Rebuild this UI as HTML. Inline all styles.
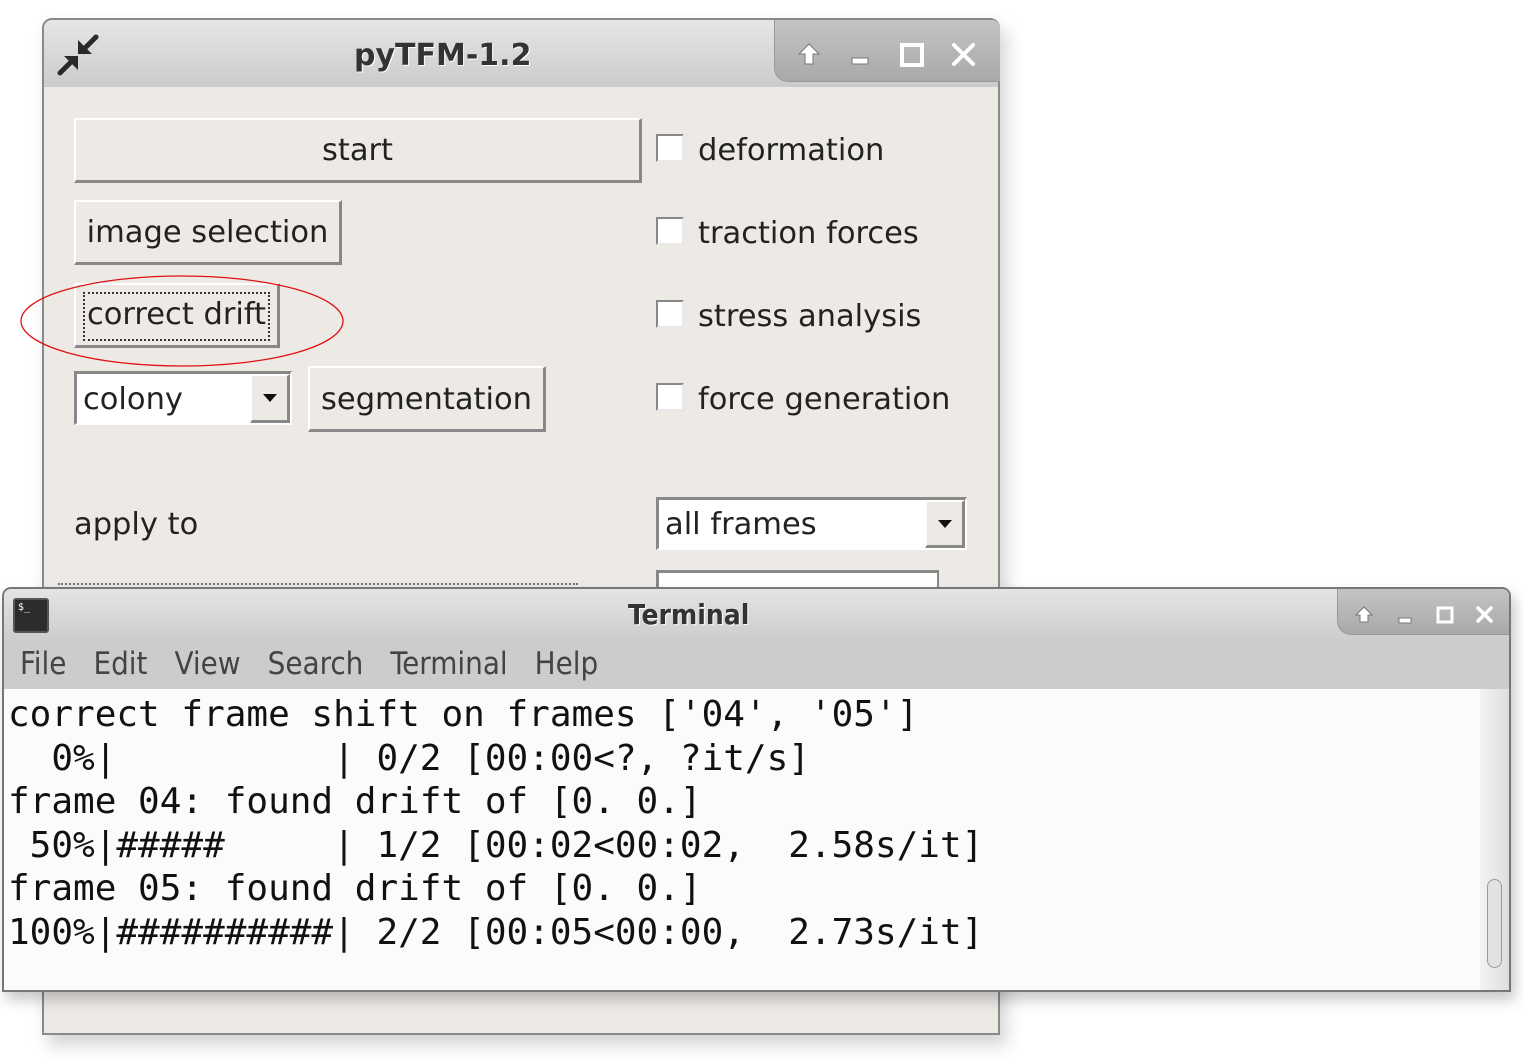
<!DOCTYPE html>
<html><head><meta charset="utf-8">
<style>
*{box-sizing:border-box;margin:0;padding:0}
body{width:1524px;height:1061px;background:#fff;position:relative;overflow:hidden;font-family:"DejaVu Sans","Liberation Sans",sans-serif;color:#222}
.abs{position:absolute}
.win{position:absolute;left:42px;top:18px;width:958px;height:1017px;background:#edeae6;border:2px solid #8a8a8a;border-radius:10px 10px 0 0;box-shadow:6px 10px 18px rgba(0,0,0,.18)}
.tb{position:absolute;left:0;top:0;right:0;height:67px;background:linear-gradient(#e6e6e6,#cbcbcb);border-radius:8px 8px 0 0}
.tab{position:absolute;background:linear-gradient(#c4c4c4,#a9a9a9);border-bottom-left-radius:14px;border-left:1px solid #999;border-bottom:1px solid #999}
.btn{position:absolute;background:#edeae6;border-top:2px solid #fff;border-left:2px solid #fff;border-right:3px solid #888;border-bottom:3px solid #888;font-size:30.5px;line-height:1;display:flex;align-items:center;justify-content:center;padding-top:3px}
.chk{position:absolute;width:28px;height:28px;background:#fff;border-top:2px solid #888;border-left:2px solid #888;border-right:2px solid #e8e8e8;border-bottom:2px solid #e8e8e8}
.lbl{position:absolute;font-size:30.5px;line-height:1}
.combo{position:absolute;background:#fff;border-top:3px solid #888;border-left:3px solid #888;border-right:2px solid #fff;border-bottom:2px solid #fff;font-size:30.5px;line-height:1}
.arr{position:absolute;top:0;bottom:0;right:0;background:#edeae6;border-top:2px solid #fff;border-left:2px solid #fff;border-right:3px solid #888;border-bottom:3px solid #888}
.arr:after{content:"";position:absolute;left:50%;top:50%;margin-left:-7px;margin-top:-4px;border-left:7px solid transparent;border-right:7px solid transparent;border-top:8px solid #111}
.term{position:absolute;left:2px;top:587px;width:1509px;height:405px;background:#ccc;border:2px solid #777;border-radius:9px 9px 0 0;box-shadow:4px 8px 14px rgba(0,0,0,.22);overflow:hidden}
.mono{font-family:"DejaVu Sans Mono","Liberation Mono",monospace;font-size:36px;line-height:43.6px;white-space:pre;color:#111}
</style></head><body>

<div class="win">
  <div class="tb">
    <svg class="abs" style="left:6px;top:8px" width="60" height="55" viewBox="0 0 60 55">
      <g stroke="#2a2a2a" stroke-width="5" stroke-linecap="round">
        <line x1="46" y1="9" x2="34" y2="21"/><line x1="10" y1="45" x2="22" y2="33"/>
      </g>
      <polygon points="28,12 28,26 42,26" fill="#2a2a2a"/>
      <polygon points="14,28 28,28 28,42" fill="#2a2a2a"/>
    </svg>
    <div class="abs" style="left:310px;top:18px;font-weight:bold;font-size:30px;color:#333;text-shadow:1px 1px 0 #fff">pyTFM-1.2</div>
    <div class="tab" style="left:730px;top:0;width:226px;height:62px;border-top-right-radius:8px"></div>
    <svg class="abs" style="left:730px;top:0" width="226" height="62" viewBox="0 0 226 62">
      <g fill="#fff" stroke="#777" stroke-width="1">
        <polygon points="35,24 45,34 39,34 39,44 31,44 31,34 25,34"/>
        <rect x="78" y="38" width="16" height="6"/>
        <rect x="128" y="25" width="20" height="20" fill="none" stroke="#fff" stroke-width="4"/>
      </g>
      <g stroke="#fff" stroke-width="4" stroke-linecap="round"><line x1="180" y1="25" x2="199" y2="44"/><line x1="199" y1="25" x2="180" y2="44"/></g>
    </svg>
  </div>

  <div class="btn" style="left:30px;top:98px;width:568px;height:65px">start</div>
  <div class="btn" style="left:30px;top:180px;width:268px;height:65px">image selection</div>
  <div class="btn" style="left:30px;top:263px;width:206px;height:65px"><span style="border:2px dotted #333;padding:6px 2px 8px">correct drift</span></div>
  <div class="combo" style="left:30px;top:351px;width:218px;height:54px"><span class="abs" style="left:6px;top:11px">colony</span><div class="arr" style="width:40px"></div></div>
  <div class="btn" style="left:264px;top:346px;width:238px;height:66px">segmentation</div>

  <div class="chk" style="left:612px;top:114px"></div><div class="lbl" style="left:654px;top:116px">deformation</div>
  <div class="chk" style="left:612px;top:197px"></div><div class="lbl" style="left:654px;top:199px">traction forces</div>
  <div class="chk" style="left:612px;top:280px"></div><div class="lbl" style="left:654px;top:282px">stress analysis</div>
  <div class="chk" style="left:612px;top:363px"></div><div class="lbl" style="left:654px;top:365px">force generation</div>

  <div class="lbl" style="left:30px;top:490px">apply to</div>
  <div class="combo" style="left:612px;top:477px;width:311px;height:53px"><span class="abs" style="left:6px;top:10px">all frames</span><div class="arr" style="width:40px"></div></div>
  <div class="combo" style="left:612px;top:550px;width:283px;height:40px;border-right-color:#888"></div>
  <div class="abs" style="left:14px;top:563px;width:520px;height:2px;border-top:2px dotted #777"></div>
</div>

<svg class="abs" style="left:0;top:0" width="400" height="400">
  <ellipse cx="182" cy="321" rx="161" ry="45" fill="none" stroke="#e01010" stroke-width="1.3"/>
</svg>

<div class="term">
  <div class="abs" style="left:0;top:0;right:0;height:51px;background:linear-gradient(#e4e4e4,#cdcdcd)"></div>
  <div class="abs" style="left:9px;top:9px;width:36px;height:35px;background:#2c2c2c;border:2px solid #555;border-radius:3px;color:#fff;font-size:10px;padding:2px 3px;font-family:'DejaVu Sans Mono',monospace">$_</div>
  <div class="abs" style="left:624px;top:9px;font-weight:bold;font-size:28px;color:#333;font-family:'DejaVu Sans Condensed','DejaVu Sans',sans-serif;text-shadow:1px 1px 0 #fff">Terminal</div>
  <div class="tab" style="left:1333px;top:0;width:180px;height:46px"></div>
  <svg class="abs" style="left:1333px;top:0" width="180" height="46" viewBox="0 0 180 46">
    <g fill="#fff" stroke="#777" stroke-width="1">
      <polygon points="27,18 35,26 31,26 31,33 23,33 23,26 19,26"/>
      <rect x="62" y="29" width="12" height="5"/>
      <rect x="101" y="19" width="14" height="14" fill="none" stroke="#fff" stroke-width="3"/>
    </g>
    <g stroke="#fff" stroke-width="3.5" stroke-linecap="round"><line x1="141" y1="19" x2="154" y2="32"/><line x1="154" y1="19" x2="141" y2="32"/></g>
  </svg>
  <div class="abs" style="left:0;top:51px;right:0;height:49px;background:#cccccc;font-family:'DejaVu Sans Condensed','DejaVu Sans',sans-serif;font-size:31px;color:#444;padding:6px 0 0 16px;white-space:nowrap">
    <span style="margin-right:27px">File</span><span style="margin-right:27px">Edit</span><span style="margin-right:27px">View</span><span style="margin-right:27px">Search</span><span style="margin-right:27px">Terminal</span><span>Help</span>
  </div>
  <div class="abs" style="left:0;top:100px;width:1476px;height:301px;background:#fbfbfb"></div>
  <div class="abs" style="left:1476px;top:100px;width:29px;height:301px;background:linear-gradient(90deg,#f3f3f3,#dedede)"></div>
  <div class="abs" style="left:1483px;top:290px;width:15px;height:89px;border:1.5px solid #999;border-radius:8px;background:#e2e2e2"></div>
  <div class="abs mono" style="left:4px;top:104px">correct frame shift on frames ['04', '05']
  0%|          | 0/2 [00:00&lt;?, ?it/s]
frame 04: found drift of [0. 0.]
 50%|#####     | 1/2 [00:02&lt;00:02,  2.58s/it]
frame 05: found drift of [0. 0.]
100%|##########| 2/2 [00:05&lt;00:00,  2.73s/it]</div>
</div>
</body></html>
